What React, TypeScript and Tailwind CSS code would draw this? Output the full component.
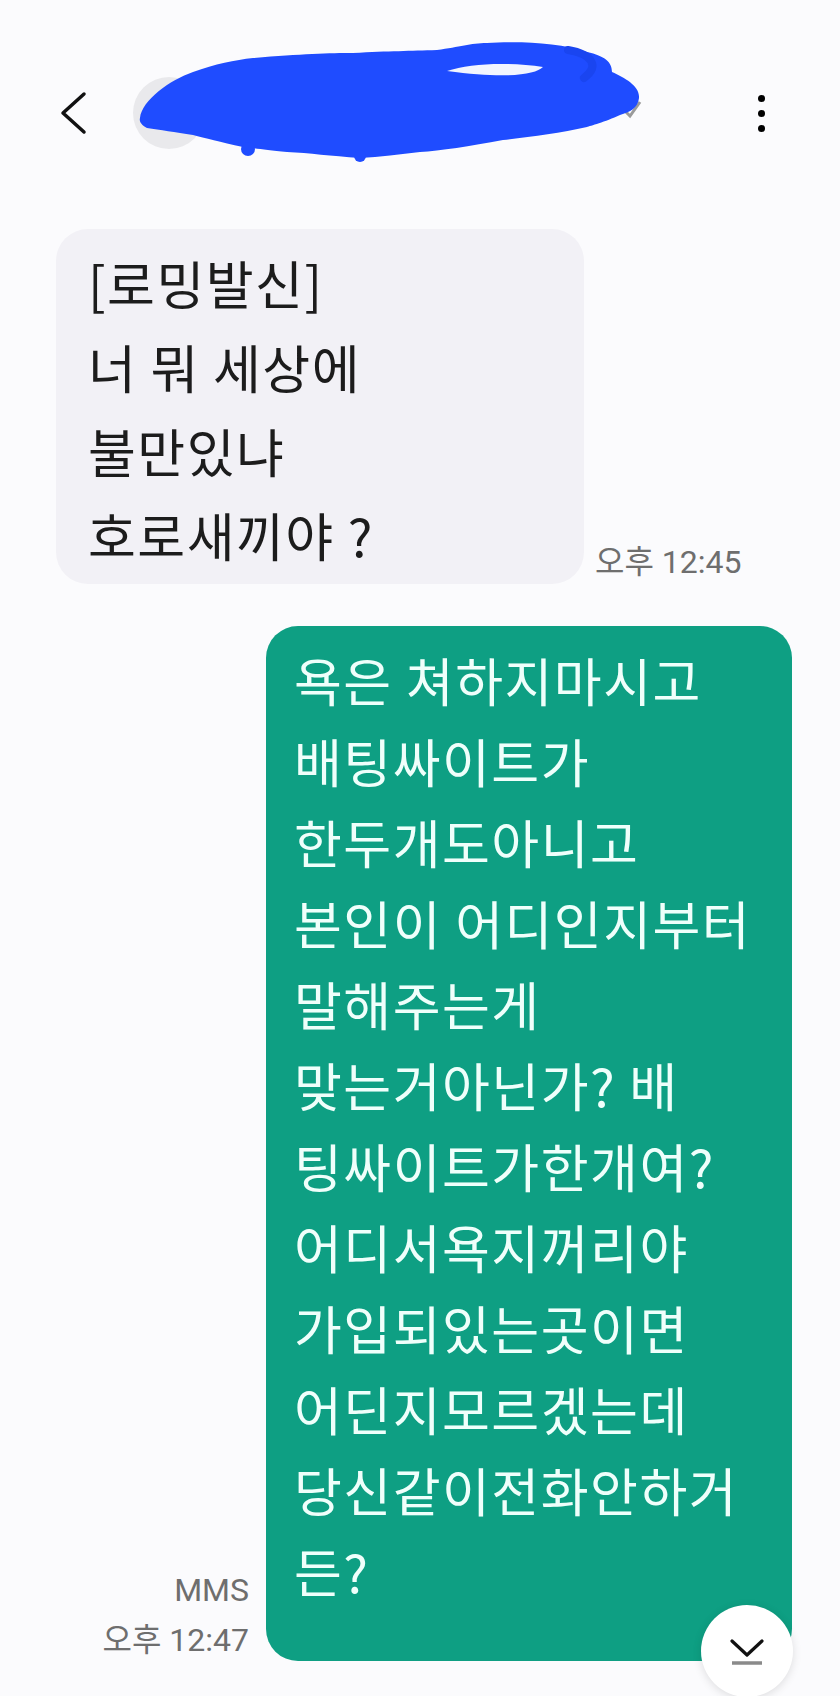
const grayLines = ['[로밍발신]', '너 뭐 세상에', '불만있냐', '호로새끼야 ?'];

const greenLines = [
  '욕은 쳐하지마시고',
  '배팅싸이트가',
  '한두개도아니고',
  '본인이 어디인지부터',
  '말해주는게',
  '맞는거아닌가? 배',
  '팅싸이트가한개여?',
  '어디서욕지꺼리야',
  '가입되있는곳이면',
  '어딘지모르겠는데',
  '당신같이전화안하거',
  '든?',
];

// blue marker scribble that hides the contact name
function Scribble() {
  return (
    <svg className="absolute left-0 top-0 pointer-events-none" width="840" height="200" viewBox="0 0 840 200">
      <polyline points="622,108 630,116 640,102" fill="none" stroke="#9a9a9a" strokeWidth="3" />
      <path
        d="M140 118 C142 100 170 80 193 72 C215 64 235 60 253 58 C300 54 330 53 353 53 C390 51 410 51 437 50 C460 47 470 43 487 43 C515 41 560 42 587 52 C605 56 612 62 612 72 C625 78 640 86 639 98 C638 108 630 112 620 115 C605 122 590 126 587 127 C560 133 530 137 503 140 C470 146 440 151 420 152 C400 154 380 157 360 158 C330 156 310 153 287 152 C265 150 255 148 243 147 C220 142 205 138 193 135 C175 132 160 130 147 128 C141 125 139 121 140 118 Z"
        fill="#1f4cff"
      />
      <path d="M447 71 C470 63 510 62 543 67 C535 75 505 79 447 71 Z" fill="#f2f5ff" />
      <path d="M568 50 C592 54 600 66 584 78" fill="none" stroke="#1a45f0" strokeWidth="8" strokeLinecap="round" />
      <circle cx="248" cy="149" r="7" fill="#1f4cff" />
      <circle cx="360" cy="156" r="6" fill="#1f4cff" />
    </svg>
  );
}

export default function App() {
  return (
    <div className="relative w-[840px] h-[1696px] overflow-hidden bg-[#fbfbfd] font-['Noto_Sans_CJK_KR',sans-serif]">
      <header className="relative h-[226px] pt-[78px]">
        <div className="flex items-center h-[70px] pl-[60px] pr-[75px]">
          <svg width="28" height="44" viewBox="0 0 28 44" className="shrink-0">
            <polyline points="24,3 3,22 24,41" fill="none" stroke="#111111" strokeWidth="3.5" strokeLinejoin="round" strokeLinecap="round" />
          </svg>
          <div className="ml-[45px] w-[72px] h-[72px] rounded-full bg-[#e9e9ec] shrink-0" />
          <div className="flex-1" />
          <div className="flex flex-col items-center gap-[8px]">
            <span className="block w-[7px] h-[7px] rounded-full bg-black" />
            <span className="block w-[7px] h-[7px] rounded-full bg-black" />
            <span className="block w-[7px] h-[7px] rounded-full bg-black" />
          </div>
        </div>
        <Scribble />
      </header>

      <div className="flex items-end gap-[11px] pl-[56px] mt-[3px]">
        <div className="w-[528px] rounded-[32px] bg-[#f2f1f6] pl-[32px] pt-[12px] pb-[7px] text-[52px] leading-[84px] tracking-[1.5px] text-[#1c1c1c]">
          {grayLines.map((l) => (
            <div key={l} className="whitespace-nowrap">{l}</div>
          ))}
        </div>
        <div className="mb-[3px] text-[32px] leading-[38px] text-[#6e6e6e] font-['Roboto','Noto_Sans_CJK_KR',sans-serif] whitespace-nowrap">
          오후 12:45
        </div>
      </div>

      <div className="flex items-end justify-end gap-[17px] pr-[48px] mt-[42px]">
        <div className="mb-[-4px] flex flex-col items-end text-[32px] leading-[50px] text-[#6e6e6e] font-['Roboto','Noto_Sans_CJK_KR',sans-serif] whitespace-nowrap">
          <span>MMS</span>
          <span>오후 12:47</span>
        </div>
        <div className="w-[526px] rounded-[32px] bg-[#0e9f83] pl-[28px] pt-[13px] pb-[50px] text-[52px] leading-[81px] tracking-[1.5px] text-[#effffb]">
          {greenLines.map((l) => (
            <div key={l} className="whitespace-nowrap">{l}</div>
          ))}
        </div>
      </div>

      <button className="absolute left-[701px] top-[1605px] w-[92px] h-[92px] rounded-full bg-white shadow-[0_2px_10px_rgba(0,0,0,0.12)] flex items-center justify-center">
        <svg width="36" height="32" viewBox="0 0 36 32">
          <polyline points="3,6 18,20 33,6" fill="none" stroke="#111111" strokeWidth="3.2" strokeLinecap="round" strokeLinejoin="round" />
          <line x1="3" y1="28" x2="33" y2="28" stroke="#8a8a8a" strokeWidth="3.5" />
        </svg>
      </button>
    </div>
  );
}
